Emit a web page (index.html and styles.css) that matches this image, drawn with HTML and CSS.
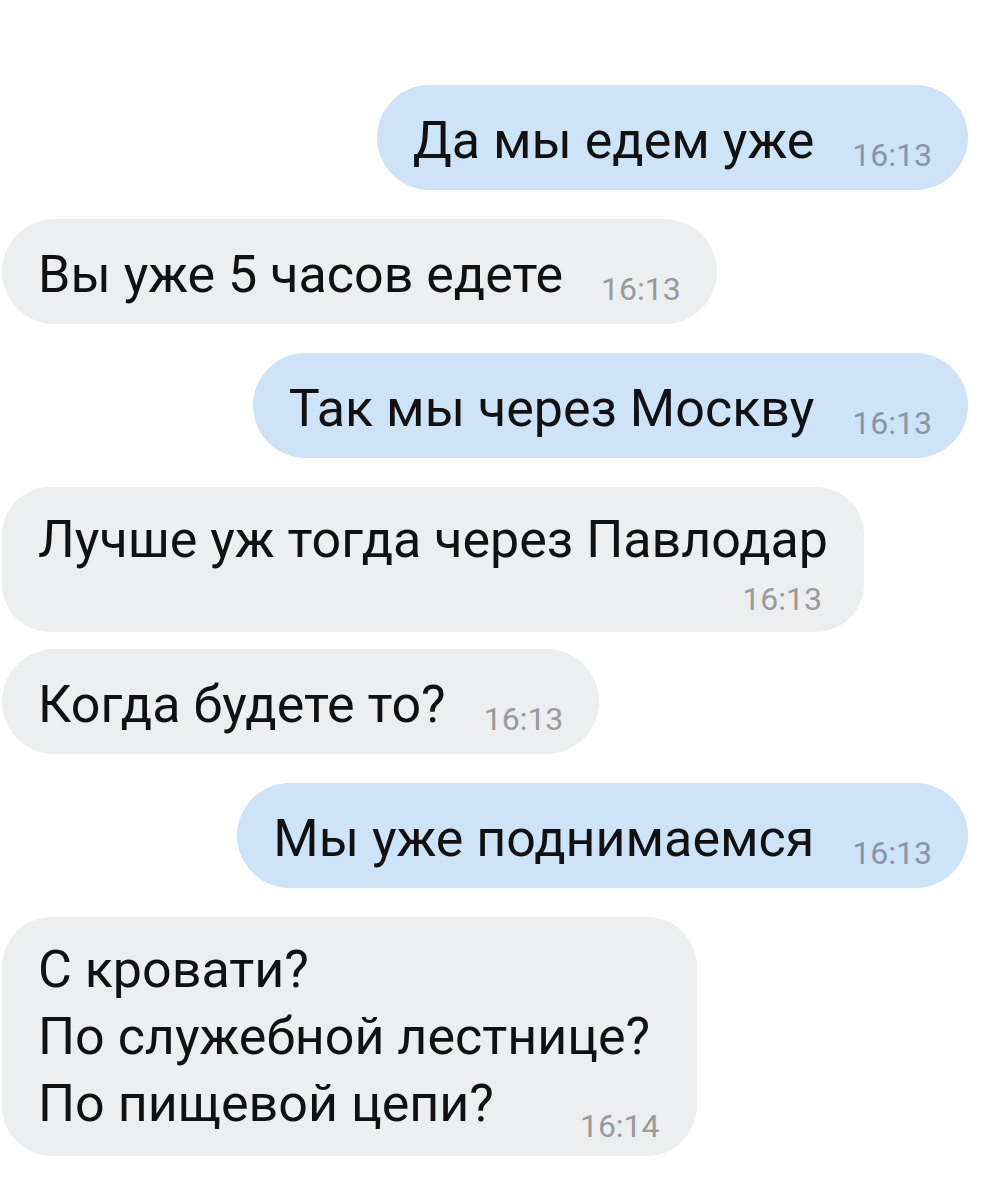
FILE: index.html
```html
<!DOCTYPE html>
<html lang="ru">
<head>
    <meta charset="UTF-8">
    <meta name="viewport" content="width=device-width, initial-scale=1.0">
    <title>Диалог</title>
    <link rel="stylesheet" href="styles.css">
</head>
<body>
    <div class="chat">
        <div class="bubble out">
            <span class="text">Да мы едем уже</span><span class="time">16:13</span>
        </div>

        <div class="bubble in">
            <span class="text">Вы уже 5 часов едете</span><span class="time">16:13</span>
        </div>

        <div class="bubble out">
            <span class="text">Так мы через Москву</span><span class="time">16:13</span>
        </div>

        <div class="bubble in stack">
            <div class="text">Лучше уж тогда через Павлодар</div>
            <div class="time">16:13</div>
        </div>

        <div class="bubble in next">
            <span class="text">Когда будете то?</span><span class="time">16:13</span>
        </div>

        <div class="bubble out">
            <span class="text">Мы уже поднимаемся</span><span class="time">16:13</span>
        </div>

        <div class="bubble in multi">
            <div class="text">С кровати?</div>
            <div class="text">По служебной лестнице?</div>
            <div class="last-line">
                <span class="text">По пищевой цепи?</span>
                <span class="time">16:14</span>
            </div>
        </div>
    </div>
</body>
</html>
```

FILE: styles.css
```css
body {
    margin: 0;
    background-color: #fff;
    font-family: Roboto, "Noto Sans", sans-serif;
    color: #111;
}

.chat {
    display: flex;
    flex-direction: column;
    gap: 29px;
    padding: 85px 15px 0 2px;
}

.bubble {
    padding: 22px 36px 16px 36px;
    border-radius: 53px;
    font-size: 52px;
    line-height: 67px;
    white-space: nowrap;
}

.bubble.in {
    align-self: flex-start;
    background-color: #edeef0;
}

.bubble.out {
    align-self: flex-end;
    background-color: #cde3f8;
}

.bubble.next {
    margin-top: -12px;
}

.time {
    margin-left: 38px;
    font-size: 32px;
    line-height: 1;
    vertical-align: -8px;
    color: #999a9c;
}

.bubble.out .time {
    color: #8596ab;
}

/* long text, time on its own line */
.bubble.stack {
    padding: 19px 36px 15px 36px;
    border-radius: 48px;
}

.bubble.stack .time {
    margin: 8px 6px 0 0;
    line-height: 36px;
    text-align: right;
}

/* several lines, time at the bottom right */
.bubble.multi {
    padding: 19px 37px 19px 36px;
    border-radius: 50px;
}

.last-line {
    display: flex;
    justify-content: space-between;
    align-items: flex-start;
    gap: 86px;
}

.last-line .time {
    margin: 40px 0 -6px 0;
}
```
